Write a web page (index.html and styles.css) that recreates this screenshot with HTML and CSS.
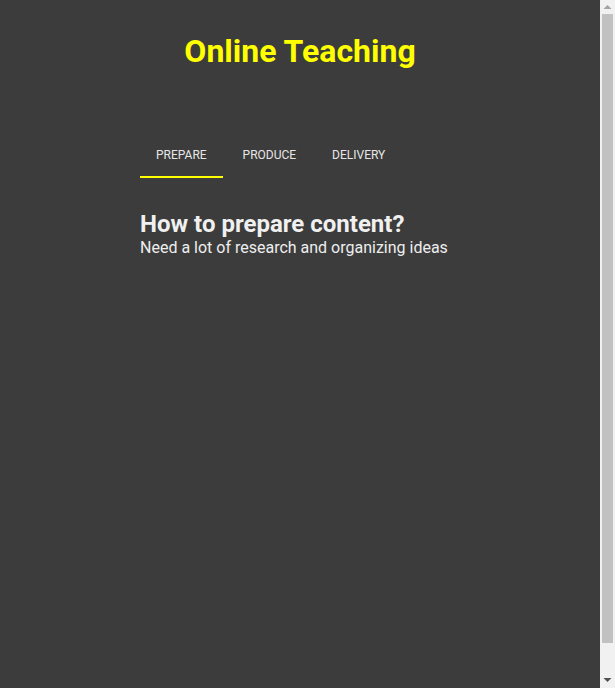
FILE: index.html
```html
<!DOCTYPE html>
<html lang="en">
<head>
<meta charset="utf-8">
<title>Online Teaching</title>
<link rel="stylesheet" href="styles.css">
</head>
<body>
<div class="app">
  <h1 class="title">Online Teaching</h1>
  <div class="content">
    <nav class="tabs">
      <button class="tab active">Prepare</button>
      <button class="tab">Produce</button>
      <button class="tab">Delivery</button>
    </nav>
    <section class="panel">
      <h2 class="panel-title">How to prepare content?</h2>
      <p class="panel-text">Need a lot of research and organizing ideas</p>
    </section>
  </div>
</div>
<div class="scrollbar" aria-hidden="true">
  <div class="sb-btn">
    <svg width="15" height="14" viewBox="0 0 15 14"><polygon points="3.5,9 7.5,5 11.5,9" fill="#a3a3a3"/></svg>
  </div>
  <div class="sb-track"><div class="sb-thumb"></div></div>
  <div class="sb-btn">
    <svg width="15" height="15" viewBox="0 0 15 15"><polygon points="3.5,5 11.5,5 7.5,9" fill="#505050"/></svg>
  </div>
</div>
</body>
</html>
```
FILE: styles.css
```css
html, body {
  margin: 0;
  padding: 0;
  background: #3c3c3c;
}
body {
  display: flex;
  height: 100vh;
  overflow: hidden;
  font-family: Roboto, "Liberation Sans", sans-serif;
  color: #eeeeee;
}
.app {
  flex: 1;
  padding-top: 33px;
}
.title {
  margin: 0;
  text-align: center;
  font-size: 32px;
  line-height: 36px;
  font-weight: 700;
  color: #ffff00;
}
.content {
  width: 320px;
  margin: 61px auto 0;
}
.tabs {
  display: flex;
  gap: 4px;
}
.tab {
  height: 48px;
  padding: 3px 16px 0;
  border: 0;
  border-bottom: 2px solid transparent;
  background: transparent;
  color: #e6e6e6;
  font-family: Roboto, "Liberation Sans", sans-serif;
  font-size: 12px;
  text-transform: uppercase;
  cursor: pointer;
}
.tab.active {
  border-bottom-color: #ffff00;
}
.panel {
  margin-top: 33px;
}
.panel-title {
  margin: 0;
  font-size: 24px;
  line-height: 27px;
  font-weight: 700;
  color: #f0f0f0;
}
.panel-text {
  margin: 0;
  font-size: 16px;
  line-height: 19px;
  color: #eeeeee;
}
.scrollbar {
  width: 15px;
  flex: none;
  display: flex;
  flex-direction: column;
  background: #f1f1f1;
}
.sb-btn {
  display: flex;
  flex: none;
}
.sb-track {
  flex: 1;
  display: flex;
  flex-direction: column;
}
.sb-thumb {
  height: 629px;
  margin: 0 2px;
  background: #c1c1c1;
}
```
